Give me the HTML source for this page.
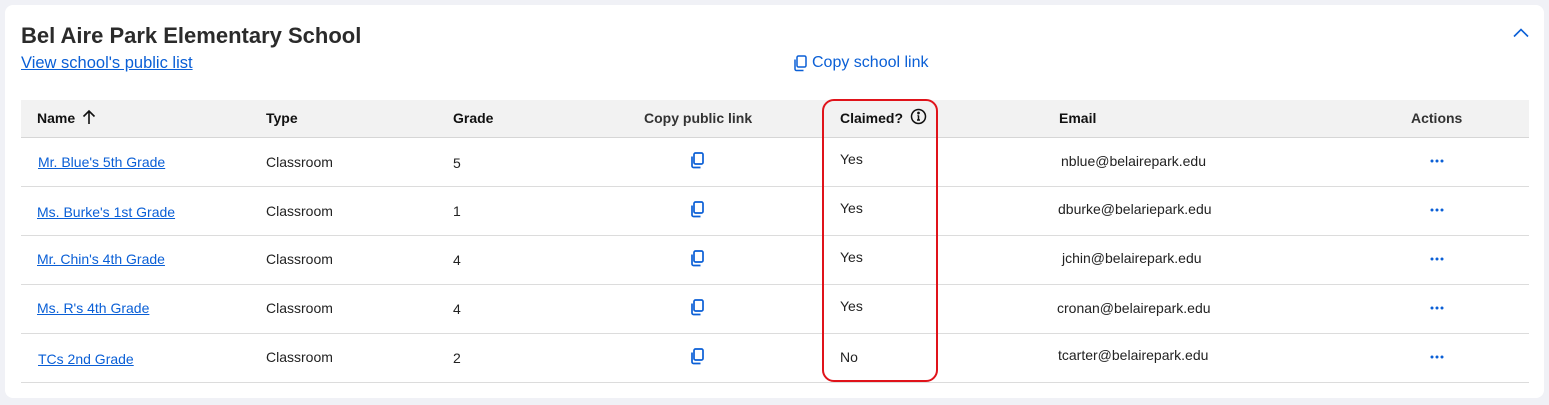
<!DOCTYPE html>
<html><head><style>
body{margin:0;width:1549px;height:405px;background:#f0f1f6;font-family:"Liberation Sans",sans-serif;position:relative;overflow:hidden}
.card{position:absolute;left:5px;top:5px;width:1539px;height:393px;background:#fff;border-radius:8px}
.a{position:absolute;white-space:nowrap}
h1{position:absolute;left:21px;top:23px;margin:0;font-size:22px;font-weight:bold;color:#2b2b2b}
.td{font-size:14px;color:#222}
.link{color:#0a5fd6 !important;text-decoration:underline}
.thead{position:absolute;left:21px;top:100px;width:1508px;height:37px;background:#f2f2f2;border-bottom:1px solid #d6d6d6}
.th{font-size:14px;font-weight:bold;color:#111;top:110px}
.row{position:absolute;left:21px;width:1508px;height:1px;background:#dcdcdc}
.dots{width:14px;height:4px}
</style></head><body>
<div class="card"></div>
<h1>Bel Aire Park Elementary School</h1>
<div class="a link" style="left:21px;top:54px;font-size:16.5px">View school's public list</div>
<svg class="a" style="left:792px;top:55px" width="16" height="17" viewBox="0 0 16 17" fill="none" stroke="#0a5fd6" stroke-width="1.5"><rect x="5" y="1" width="9" height="11" rx="1.5"/><path d="M3 4.5v9.5a1.5 1.5 0 0 0 1.5 1.5h7"/></svg>
<div class="a" style="left:812px;top:54px;font-size:16px;color:#0a5fd6">Copy school link</div>
<svg class="a" style="left:1513px;top:28px" width="16" height="10" viewBox="0 0 16 10" fill="none" stroke="#0a5fd6" stroke-width="1.6"><path d="M1 8.5L8 1.5L15 8.5"/></svg>
<div class="thead"></div>
<div class="a th" style="left:37px">Name</div>
<svg class="a" style="left:82px;top:109px" width="14" height="16" viewBox="0 0 14 16" fill="none" stroke="#111" stroke-width="1.6"><path d="M7 15V2M1.5 7.5L7 2l5.5 5.5"/></svg>
<div class="a th" style="left:266px">Type</div>
<div class="a th" style="left:453px">Grade</div>
<div class="a th" style="left:644px;color:#333">Copy public link</div>
<div class="a th" style="left:840px">Claimed?</div>
<svg class="a" style="left:910px;top:108px" width="17" height="17" viewBox="0 0 17 17" fill="none" stroke="#111" stroke-width="1.5"><circle cx="8.5" cy="8.5" r="7"/><path d="M8.5 7.5v4.5M7 12h3M7.5 7.5h1"/><circle cx="8.5" cy="5" r=".6" fill="#111"/></svg>
<div class="a th" style="left:1059px">Email</div>
<div class="a th" style="left:1411px;color:#333">Actions</div>

<div class="row" style="top:186px"></div>
<div class="row" style="top:235px"></div>
<div class="row" style="top:284px"></div>
<div class="row" style="top:333px"></div>
<div class="row" style="top:382px"></div>

<div class="a td link" style="left:38px;top:154px">Mr. Blue's 5th Grade</div>
<div class="a td link" style="left:37px;top:204px">Ms. Burke's 1st Grade</div>
<div class="a td link" style="left:37px;top:251px">Mr. Chin's 4th Grade</div>
<div class="a td link" style="left:37px;top:300px">Ms. R's 4th Grade</div>
<div class="a td link" style="left:38px;top:351px">TCs 2nd Grade</div>

<div class="a td" style="left:266px;top:154px">Classroom</div>
<div class="a td" style="left:266px;top:203px">Classroom</div>
<div class="a td" style="left:266px;top:251px">Classroom</div>
<div class="a td" style="left:266px;top:300px">Classroom</div>
<div class="a td" style="left:266px;top:349px">Classroom</div>

<div class="a td" style="left:453px;top:155px">5</div>
<div class="a td" style="left:453px;top:203px">1</div>
<div class="a td" style="left:453px;top:252px">4</div>
<div class="a td" style="left:453px;top:301px">4</div>
<div class="a td" style="left:453px;top:350px">2</div>

<svg class="a" style="left:689px;top:152px" width="16" height="17" viewBox="0 0 16 17" fill="none" stroke="#0a5fd6" stroke-width="1.7"><rect x="5" y="1" width="9" height="11" rx="1.5"/><path d="M3 4.5v9.5a1.5 1.5 0 0 0 1.5 1.5h7"/></svg>
<svg class="a" style="left:689px;top:201px" width="16" height="17" viewBox="0 0 16 17" fill="none" stroke="#0a5fd6" stroke-width="1.7"><rect x="5" y="1" width="9" height="11" rx="1.5"/><path d="M3 4.5v9.5a1.5 1.5 0 0 0 1.5 1.5h7"/></svg>
<svg class="a" style="left:689px;top:250px" width="16" height="17" viewBox="0 0 16 17" fill="none" stroke="#0a5fd6" stroke-width="1.7"><rect x="5" y="1" width="9" height="11" rx="1.5"/><path d="M3 4.5v9.5a1.5 1.5 0 0 0 1.5 1.5h7"/></svg>
<svg class="a" style="left:689px;top:299px" width="16" height="17" viewBox="0 0 16 17" fill="none" stroke="#0a5fd6" stroke-width="1.7"><rect x="5" y="1" width="9" height="11" rx="1.5"/><path d="M3 4.5v9.5a1.5 1.5 0 0 0 1.5 1.5h7"/></svg>
<svg class="a" style="left:689px;top:348px" width="16" height="17" viewBox="0 0 16 17" fill="none" stroke="#0a5fd6" stroke-width="1.7"><rect x="5" y="1" width="9" height="11" rx="1.5"/><path d="M3 4.5v9.5a1.5 1.5 0 0 0 1.5 1.5h7"/></svg>

<div class="a td" style="left:840px;top:151px">Yes</div>
<div class="a td" style="left:840px;top:200px">Yes</div>
<div class="a td" style="left:840px;top:249px">Yes</div>
<div class="a td" style="left:840px;top:298px">Yes</div>
<div class="a td" style="left:840px;top:349px">No</div>

<div class="a td" style="left:1061px;top:153px">nblue@belairepark.edu</div>
<div class="a td" style="left:1058px;top:201px">dburke@belariepark.edu</div>
<div class="a td" style="left:1062px;top:250px">jchin@belairepark.edu</div>
<div class="a td" style="left:1057px;top:300px">cronan@belairepark.edu</div>
<div class="a td" style="left:1058px;top:347px">tcarter@belairepark.edu</div>

<svg class="a dots" style="left:1430px;top:159px" viewBox="0 0 14 4" fill="#0a5fd6"><circle cx="2" cy="2" r="1.5"/><circle cx="7" cy="2" r="1.5"/><circle cx="12" cy="2" r="1.5"/></svg>
<svg class="a dots" style="left:1430px;top:208px" viewBox="0 0 14 4" fill="#0a5fd6"><circle cx="2" cy="2" r="1.5"/><circle cx="7" cy="2" r="1.5"/><circle cx="12" cy="2" r="1.5"/></svg>
<svg class="a dots" style="left:1430px;top:257px" viewBox="0 0 14 4" fill="#0a5fd6"><circle cx="2" cy="2" r="1.5"/><circle cx="7" cy="2" r="1.5"/><circle cx="12" cy="2" r="1.5"/></svg>
<svg class="a dots" style="left:1430px;top:306px" viewBox="0 0 14 4" fill="#0a5fd6"><circle cx="2" cy="2" r="1.5"/><circle cx="7" cy="2" r="1.5"/><circle cx="12" cy="2" r="1.5"/></svg>
<svg class="a dots" style="left:1430px;top:355px" viewBox="0 0 14 4" fill="#0a5fd6"><circle cx="2" cy="2" r="1.5"/><circle cx="7" cy="2" r="1.5"/><circle cx="12" cy="2" r="1.5"/></svg>

<div class="a" style="left:822px;top:99px;width:112px;height:279px;border:2px solid #e0131a;border-radius:12px"></div>
</body></html>
